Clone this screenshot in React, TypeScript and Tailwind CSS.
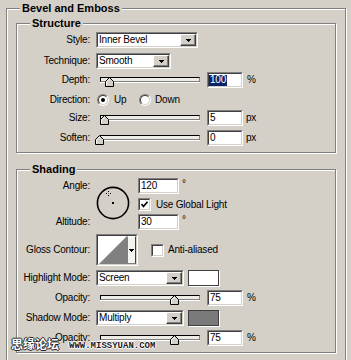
import React from "react";

function Field({ cls, children }: { cls: string; children?: React.ReactNode }) {
  return (
    <div className={`${cls} h-[16px] shrink-0 border border-t-[#808080] border-l-[#808080] border-b-white border-r-white`}>
      <div className="w-full h-full border border-t-[#404040] border-l-[#404040] border-b-[#d4d0c8] border-r-[#d4d0c8] bg-white flex items-center overflow-hidden">
        {children}
      </div>
    </div>
  );
}

function Tri() {
  return (
    <svg width="5" height="3" shapeRendering="crispEdges">
      <rect x="0" y="0" width="5" height="1" fill="#000" />
      <rect x="1" y="1" width="3" height="1" fill="#000" />
      <rect x="2" y="2" width="1" height="1" fill="#000" />
    </svg>
  );
}

function Btn() {
  return (
    <div className="w-[16px] h-full shrink-0 border border-t-white border-l-white border-b-[#404040] border-r-[#404040] bg-[#d4d0c8] shadow-[inset_-1px_-1px_0_#808080] flex items-center justify-center">
      <Tri />
    </div>
  );
}

function Drop({ cls, value }: { cls: string; value: string }) {
  return (
    <Field cls={cls}>
      <span className="flex-1 pl-[1px]">{value}</span>
      <Btn />
    </Field>
  );
}

function Slider({ pos }: { pos: number }) {
  return (
    <div className="relative ml-[4px] w-[100px] h-[16px] shrink-0">
      <div className="mt-[5px] h-[5px] border border-t-black border-l-black border-b-[#808080] border-r-[#808080] bg-[#ecebe6] shadow-[0_1px_0_#fff]" />
      <svg className="absolute top-[5px]" style={{ left: pos }} width="9" height="10">
        <polygon points="4.5,0.5 8.5,4.5 8.5,9.5 0.5,9.5 0.5,4.5" fill="#d4d0c8" stroke="#000" strokeWidth="1" />
        <polyline points="1.5,8.5 1.5,5 4.5,2" fill="none" stroke="#fff" strokeWidth="1" />
      </svg>
    </div>
  );
}

function Check({ on }: { on?: boolean }) {
  return (
    <div className="w-[13px] h-[13px] shrink-0 border border-t-[#808080] border-l-[#808080] border-b-white border-r-white">
      <div className="w-full h-full border border-t-[#404040] border-l-[#404040] border-b-[#d4d0c8] border-r-[#d4d0c8] bg-white flex items-center justify-center">
        {on && (
          <svg width="9" height="9">
            <polyline points="1.5,4 3.5,6.5 7.5,1.8" fill="none" stroke="#000" strokeWidth="1.7" />
          </svg>
        )}
      </div>
    </div>
  );
}

function Radio({ on }: { on?: boolean }) {
  return (
    <div className="w-[12px] h-[12px] shrink-0 rounded-full border border-t-[#808080] border-l-[#808080] border-b-white border-r-white">
      <div className="w-full h-full rounded-full border border-t-[#404040] border-l-[#404040] border-b-[#d4d0c8] border-r-[#d4d0c8] bg-white flex items-center justify-center">
        {on && <div className="w-[4px] h-[4px] rounded-full bg-black" />}
      </div>
    </div>
  );
}

function Label({ children }: { children: React.ReactNode }) {
  return <div className="w-[73px] mr-[6px] shrink-0 text-right">{children}</div>;
}

function Title({ children }: { children: React.ReactNode }) {
  return (
    <div className="absolute left-[13px] top-[-7px] px-[2px] bg-[#d4d0c8] text-[11px] leading-[13px] font-bold tracking-normal">
      {children}
    </div>
  );
}

export default function App() {
  return (
    <div className="relative w-[351px] h-[360px] overflow-hidden bg-[#d4d0c8] pt-[8px] pl-[6px] font-['Liberation_Sans',Arial,sans-serif] text-[10px] leading-none tracking-[-0.2px] text-black">
      <div className="relative w-[340px] h-[400px] border border-[#808080] shadow-[inset_1px_1px_0_#fff,1px_1px_0_#fff] pl-[9px] pt-[14px]">
        <Title>Bevel and Emboss</Title>

        {/* Structure */}
        <div className="relative w-[320px] h-[130px] border border-[#808080] shadow-[inset_1px_1px_0_#fff,1px_1px_0_#fff] pt-[8px]">
          <Title>Structure</Title>
          <div className="flex items-center h-[16px]">
            <Label>Style:</Label>
            <Drop cls="w-[102px]" value="Inner Bevel" />
          </div>
          <div className="flex items-center h-[16px] mt-[5px]">
            <Label>Technique:</Label>
            <Drop cls="w-[75px]" value="Smooth" />
          </div>
          <div className="flex items-center h-[16px] mt-[3px]">
            <Label>Depth:</Label>
            <Slider pos={5} />
            <Field cls="w-[36px] ml-[7px]">
              <span className="bg-[#0a246a] text-white px-[1px] h-[11px] flex items-center">100</span>
            </Field>
            <span className="ml-[4px]">%</span>
          </div>
          <div className="flex items-center h-[16px] mt-[4px]">
            <Label>Direction:</Label>
            <div className="flex items-center w-[43px] pl-[1px]">
              <Radio on />
              <span className="ml-[5px]">Up</span>
            </div>
            <Radio />
            <span className="ml-[4px]">Down</span>
          </div>
          <div className="flex items-center h-[16px] mt-[2px]">
            <Label>Size:</Label>
            <Slider pos={0} />
            <Field cls="w-[36px] ml-[7px]">
              <span className="pl-[1px]">5</span>
            </Field>
            <span className="ml-[3px]">px</span>
          </div>
          <div className="flex items-center h-[16px] mt-[4px]">
            <Label>Soften:</Label>
            <Slider pos={-5} />
            <Field cls="w-[36px] ml-[7px]">
              <span className="pl-[1px]">0</span>
            </Field>
            <span className="ml-[3px]">px</span>
          </div>
        </div>

        {/* Shading */}
        <div className="relative mt-[16px] w-[320px] h-[184px] border border-[#808080] shadow-[inset_1px_1px_0_#fff,1px_1px_0_#fff] pt-[8px]">
          <Title>Shading</Title>
          <div className="flex h-[52px]">
            <div className="w-[73px] mr-[6px] shrink-0 flex flex-col justify-between items-end">
              <div className="h-[16px] flex items-center">Angle:</div>
              <div className="h-[16px] flex items-center">Altitude:</div>
            </div>
            <div className="w-[42px] shrink-0">
              <svg className="mt-[8px]" width="34" height="34">
                <circle cx="17" cy="17" r="15.6" fill="none" stroke="#000" strokeWidth="1.6" />
                <rect x="16" y="16" width="2" height="2" fill="#000" />
                <g fill="#000" shapeRendering="crispEdges">
                  <rect x="12" y="5" width="1" height="1" />
                  <rect x="12" y="9" width="1" height="1" />
                  <rect x="10" y="7" width="1" height="1" />
                  <rect x="14" y="7" width="1" height="1" />
                  <rect x="12" y="7" width="1" height="1" fill="#808080" />
                </g>
              </svg>
            </div>
            <div className="flex flex-col">
              <div className="flex h-[16px]">
                <Field cls="w-[41px]">
                  <span className="pl-[1px]">120</span>
                </Field>
                <span className="ml-[3px] mt-[1px]">°</span>
              </div>
              <div className="flex items-center h-[13px] mt-[4px]">
                <Check on />
                <span className="ml-[5px]">Use Global Light</span>
              </div>
              <div className="flex h-[16px] mt-[3px]">
                <Field cls="w-[41px]">
                  <span className="pl-[1px]">30</span>
                </Field>
                <span className="ml-[3px] mt-[1px]">°</span>
              </div>
            </div>
          </div>

          <div className="flex items-center h-[32px] mt-[4px]">
            <Label>Gloss Contour:</Label>
            <div className="w-[42px] h-[32px] shrink-0 border border-t-[#808080] border-l-[#808080] border-b-white border-r-white">
              <div className="w-full h-full flex border border-t-[#404040] border-l-[#404040] border-b-[#d4d0c8] border-r-[#d4d0c8] bg-white">
                <svg width="29" height="28" className="shrink-0">
                  <polygon points="1,28 29,0 29,28" fill="#808080" />
                </svg>
                <div className="flex-1 border border-t-white border-l-[#808080] border-b-[#808080] border-r-[#404040] bg-[#f4f3f0] flex items-center justify-center">
                  <Tri />
                </div>
              </div>
            </div>
            <div className="ml-[13px]">
              <Check />
            </div>
            <span className="ml-[4px]">Anti-aliased</span>
          </div>

          <div className="flex items-center h-[16px] mt-[4px]">
            <Label>Highlight Mode:</Label>
            <Drop cls="w-[88px]" value="Screen" />
            <div className="ml-[4px] w-[31px] h-[16px] border border-[#404040] bg-white shadow-[1px_1px_0_#fff]" />
          </div>
          <div className="flex items-center h-[16px] mt-[4px]">
            <Label>Opacity:</Label>
            <Slider pos={70} />
            <Field cls="w-[36px] ml-[7px]">
              <span className="pl-[1px]">75</span>
            </Field>
            <span className="ml-[4px]">%</span>
          </div>
          <div className="flex items-center h-[16px] mt-[4px]">
            <Label>Shadow Mode:</Label>
            <Drop cls="w-[88px]" value="Multiply" />
            <div className="ml-[4px] w-[31px] h-[16px] border border-[#404040] bg-[#7a7a7a] shadow-[1px_1px_0_#fff]" />
          </div>
          <div className="flex items-center h-[16px] mt-[4px]">
            <Label>Opacity:</Label>
            <Slider pos={70} />
            <Field cls="w-[36px] ml-[7px]">
              <span className="pl-[1px]">75</span>
            </Field>
            <span className="ml-[4px]">%</span>
          </div>
        </div>
      </div>

      {/* watermark */}
      <div className="absolute left-[11px] top-[337px] text-[12px] leading-[13px] tracking-normal font-bold text-white font-['Noto_Sans_CJK_SC',sans-serif] [text-shadow:1px_0_0_#222,-1px_0_0_#222,0_1px_0_#222,0_-1px_0_#222]">
        思缘论坛
      </div>
      <div className="absolute left-[69px] top-[342px] text-[9px] leading-[9px] tracking-normal font-bold text-[#1a1a2a] font-['Liberation_Mono',monospace] [text-shadow:1px_0_0_#fff,-1px_0_0_#fff,0_1px_0_#fff,0_-1px_0_#fff]">
        WWW.MISSYUAN.COM
      </div>
    </div>
  );
}
